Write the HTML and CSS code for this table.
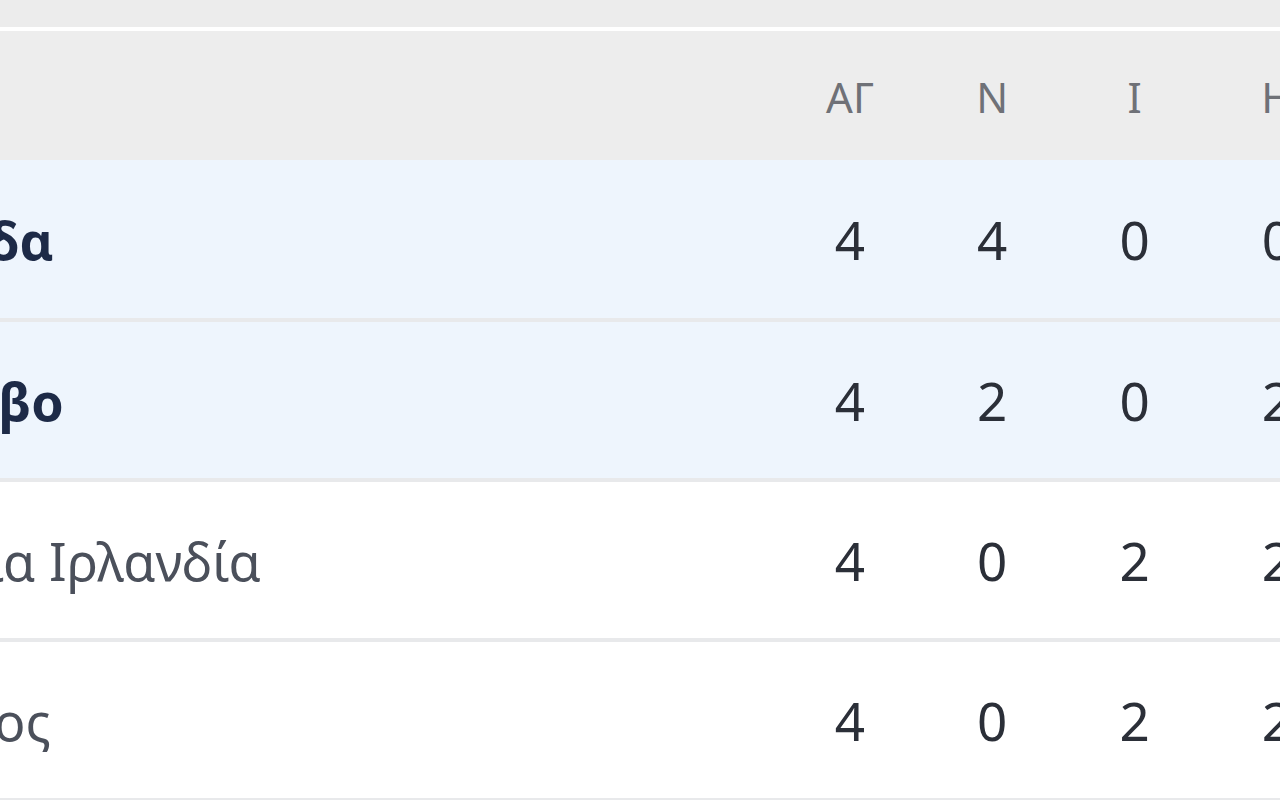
FILE: index.html
```html
<!DOCTYPE html>
<html lang="el">
<head>
<meta charset="utf-8">
<title>Βαθμολογία</title>
<link rel="stylesheet" href="styles.css">
</head>
<body>
<div class="page">
  <div class="topbar"></div>
  <div class="table-wrap">
    <table class="standings">
      <thead>
        <tr>
          <th class="team"></th>
          <th>ΑΓ</th>
          <th>Ν</th>
          <th>Ι</th>
          <th>Η</th>
        </tr>
      </thead>
      <tbody>
        <tr class="qualified">
          <td class="team">Ελλάδα</td>
          <td>4</td><td>4</td><td>0</td><td>0</td>
        </tr>
        <tr class="qualified">
          <td class="team">Κόσοβο</td>
          <td>4</td><td>2</td><td>0</td><td>2</td>
        </tr>
        <tr>
          <td class="team">Βόρεια Ιρλανδία</td>
          <td>4</td><td>0</td><td>2</td><td>2</td>
        </tr>
        <tr>
          <td class="team">Κύπρος</td>
          <td>4</td><td>0</td><td>2</td><td>2</td>
        </tr>
      </tbody>
    </table>
  </div>
</div>
</body>
</html>
```

FILE: styles.css
```css
html, body {
  margin: 0;
  padding: 0;
  background: #ffffff;
  overflow: hidden;
}

.page {
  width: 1280px;
  height: 800px;
  overflow: hidden;
  font-family: "Noto Sans", "Open Sans", sans-serif;
}

.topbar {
  height: 27px;
  background: #ececec;
  border-bottom: 4px solid #ffffff;
}

.table-wrap {
  margin-left: -134px;
}

.standings {
  border-collapse: collapse;
  table-layout: fixed;
  width: 1482px;
}

.standings th,
.standings td {
  width: 142px;
  padding: 0;
  text-align: center;
}

.standings .team {
  width: 911px;
  text-align: left;
}

.standings thead tr {
  height: 129px;
  background: #ededed;
}

.standings th {
  font-size: 42px;
  font-weight: 400;
  color: #6f7177;
  padding-top: 2px;
}

.standings tbody tr {
  height: 160px;
  background: #ffffff;
  border-bottom: 4px solid #e8e9eb;
}

.standings tbody tr.qualified {
  background: #eef5fd;
}

.standings td {
  font-size: 53px;
  color: #2b2f38;
}

.standings td.team {
  font-size: 52px;
  color: #4b505b;
}

.standings tr.qualified td.team {
  font-weight: 700;
  color: #1d2a47;
}
```
